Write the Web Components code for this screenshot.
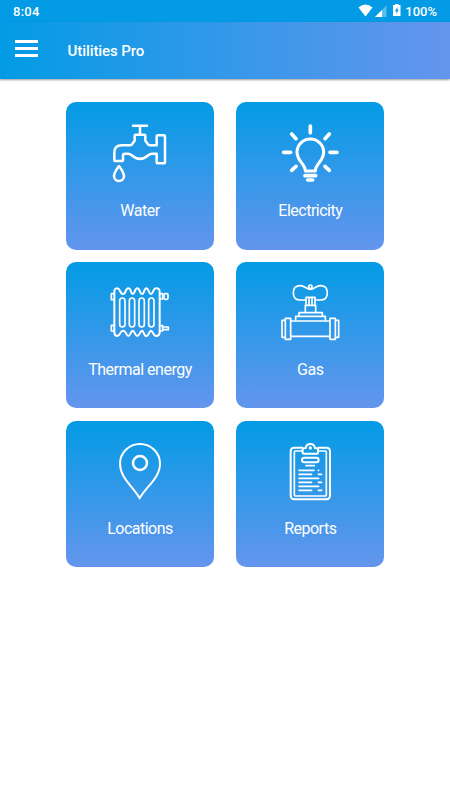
<!DOCTYPE html>
<html lang="en">
<head>
<meta charset="utf-8">
<title>Utilities Pro</title>
<style>
  body {
    margin: 0;
    background: #fff;
    font-family: Roboto, "Liberation Sans", sans-serif;
    color: #fff;
  }
</style>
</head>
<body>
<utilities-app></utilities-app>

<script>
// Icons are drawn on a 240 wide canvas and shown at a third of that size
const ICONS = {
  water: `
    <path d="M99 32H141M120 32V58"/>
    <path d="M43 134V113Q43 91 65 91H89Q93 91 96 88L104 77V62Q104 59 107 59H133Q136 59 136 62V77L144 88Q147 91 151 91H170V65Q170 61 174 61H191Q195 61 195 65V141Q195 145 191 145H174Q170 145 170 141V116H156Q150 116 146 120Q120 143 94 120Q90 116 84 116H74Q69 116 69 121V134Q69 138 65 138H47Q43 138 43 134Z"/>
    <path d="M57 153Q42 173 42 183A15 15 0 0 0 72 183Q72 173 57 153Z"/>`,
  electricity: `
    <g stroke-width="11">
      <path d="M121 33V53M65 57L78 71M178 57L165 71M41 112H62M180 112H201M65 166L78 154M178 166L165 154"/>
    </g>
    <path stroke-width="9" d="M106 168C106 145 81 140 81 111A40 39 0 0 1 161 111C161 140 136 145 136 168Z"/>
    <path stroke-width="11" d="M105 182H137M113 195H128"/>`,
  thermal: `
    <path stroke-width="6" d="M43 37Q46 30 52 31C62 32 59 48 69 48S75 31 85 31S91 48 98 48S104 31 112 31S119 48 126 48S132 31 139 31S146 48 153 48S159 31 168 31Q179 31 179 41V163Q179 174 168 174C159 174 159 158 153 158S147 174 139 174S132 158 126 158S119 174 112 174S104 158 98 158S92 174 85 174S79 158 69 158S62 174 52 174Q43 174 43 163Z"/>
    <g stroke-width="5">
      <rect x="59" y="60" width="16" height="87" rx="8"/>
      <rect x="88" y="60" width="16" height="87" rx="8"/>
      <rect x="117" y="60" width="16" height="87" rx="8"/>
      <rect x="146" y="60" width="16" height="87" rx="8"/>
      <path d="M42 47H34V65H42M42 142H34V159H42M181 47H188V63H181M181 143H188V159H181M189 147H205V155H189"/>
      <rect x="192" y="47" width="12" height="17" rx="4"/>
    </g>`,
  gas: `
    <g stroke-width="5">
      <path d="M107 66H91C77 66 70 59 70 44S77 23 91 23C104 23 109 34 121 34S138 23 151 23C165 23 172 29 172 44S165 66 151 66H136"/>
      <circle cx="121" cy="26" r="5"/>
      <path d="M108 80V58H135V80M117 59V79M126 59V79M106 102V82H137V102"/>
      <path d="M87 113V104H157V113M77 127V115H166V127"/>
      <path d="M64 129H178M64 175H178"/>
      <rect x="46" y="121" width="16" height="63"/>
      <rect x="180" y="121" width="16" height="63"/>
      <path d="M45 127H36V178H45M197 127H206V178H197"/>
    </g>`,
  locations: `
    <path stroke-width="6" d="M119 190C103 158 60 130 60 86A60 59 0 0 1 180 86C180 130 135 158 119 190Z"/>
    <circle cx="120" cy="84" r="21"/>`,
  reports: `
    <path stroke-width="6" d="M97 38H73Q62 38 62 49V181Q62 193 73 193H169Q180 193 180 181V49Q180 38 169 38H145"/>
    <path stroke-width="5" d="M96 48H75Q73 48 73 51V180Q73 183 76 183H166Q169 183 169 180V51Q169 48 166 48H147"/>
    <path stroke-width="6" d="M98 54V42Q99 39 107 39Q109 27 121 27T135 39Q143 39 144 42V54Q144 56 141 56H101Q98 56 98 54Z"/>
    <circle cx="121" cy="39" r="3" stroke-width="4"/>
    <rect x="96" y="68" width="50" height="14" rx="7" stroke-width="6"/>
    <path stroke-width="5" d="M108 92H133M87 106H132M145 106H146M87 118H125M145 118H155M87 130H146M87 142H125M145 142H155M87 154H146M87 166H125M145 166H155"/>`
};

class StatusBar extends HTMLElement {
  constructor() {
    super();
    this.attachShadow({ mode: "open" });
    this.shadowRoot.innerHTML = `
    <style>
      :host {
        display: flex;
        justify-content: space-between;
        box-sizing: border-box;
        height: 22px;
        padding: 0 13px;
        background: #039be5;
        font-size: 13px;
        font-weight: 500;
        line-height: 23px;
      }
      .time { letter-spacing: .25px; }
      .right { display: flex; }
      svg { display: block; }
    </style>
    <span class="time"><slot name="time"></slot></span>
    <div class="right">
      <svg width="47" height="22" viewBox="0 0 47 22" fill="#fff">
        <path d="M.5 7.500Q7.500 1.500 14.500 7.500L7.500 16.500Z"/>
        <path opacity=".35" d="M17 17L28.500 5.500V17Z"/>
        <path d="M17 17L24 10V17Z"/>
        <path fill-rule="evenodd" d="M37 4H40.500V5H42.500V16H35V5H37ZM39.500 7L37 11.200H38.400V14L40.700 9.800H39.500Z"/>
      </svg>
      <span><slot name="battery"></slot></span>
    </div>`;
  }
}

class AppBar extends HTMLElement {
  constructor() {
    super();
    this.attachShadow({ mode: "open" });
    this.shadowRoot.innerHTML = `
    <style>
      :host {
        display: flex;
        align-items: center;
        box-sizing: border-box;
        height: 57px;
        padding-left: 15px;
        background: linear-gradient(to right, #039be5, #6495ed);
        box-shadow: 0 1px 2px rgba(0, 0, 0, .4);
      }
      .menu {
        display: flex;
        flex-direction: column;
        gap: 4px;
        width: 23px;
        margin: -4px 29.500px 0 0;
      }
      .menu i { height: 3px; background: #fff; }
      h1 { margin: 0; font-size: 15px; font-weight: 500; line-height: 20px; letter-spacing: -.08px; }
    </style>
    <div class="menu"><i></i><i></i><i></i></div>
    <h1><slot></slot></h1>`;
  }
}

class UtilityCard extends HTMLElement {
  constructor() {
    super();
    this.attachShadow({ mode: "open" });
    this.shadowRoot.innerHTML = `
    <style>
      :host {
        display: flex;
        flex-direction: column;
        align-items: center;
        box-sizing: border-box;
        padding-top: 13px;
        border-radius: 10px;
        background: linear-gradient(#039be5, #6495ed);
      }
      svg {
        display: block;
        fill: none;
        stroke: #fff;
        stroke-width: 7.5;
        stroke-linecap: round;
        stroke-linejoin: round;
      }
      .label {
        margin-top: 10.600px;
        font-size: 16px;
        line-height: 20px;
        letter-spacing: -.5px;
        white-space: nowrap;
      }
    </style>
    <svg width="80" height="75" viewBox="0 ${this.getAttribute("shift") || 0} 240 225">${ICONS[this.getAttribute("icon")]}</svg>
    <div class="label"><slot></slot></div>`;
  }
}

class UtilitiesApp extends HTMLElement {
  constructor() {
    super();
    this.attachShadow({ mode: "open" });
    this.shadowRoot.innerHTML = `
    <style>
      :host { display: block; min-height: 800px; }
      main {
        display: grid;
        grid-template-columns: 148px 148px;
        grid-template-rows: 147.500px 146.600px 146.600px;
        gap: 12.300px 22.300px;
        padding: 23px 0 0 66px;
      }
    </style>
    <status-bar><span slot="time">8:04</span><span slot="battery">100%</span></status-bar>
    <app-bar>Utilities Pro</app-bar>
    <main>
      <utility-card icon="water">Water</utility-card>
      <utility-card icon="electricity">Electricity</utility-card>
      <utility-card icon="thermal" shift="-9">Thermal energy</utility-card>
      <utility-card icon="gas" shift="-9">Gas</utility-card>
      <utility-card icon="locations" shift="-3">Locations</utility-card>
      <utility-card icon="reports" shift="-3">Reports</utility-card>
    </main>`;
  }
}

customElements.define("status-bar", StatusBar);
customElements.define("app-bar", AppBar);
customElements.define("utility-card", UtilityCard);
customElements.define("utilities-app", UtilitiesApp);
</script>
</body>
</html>
